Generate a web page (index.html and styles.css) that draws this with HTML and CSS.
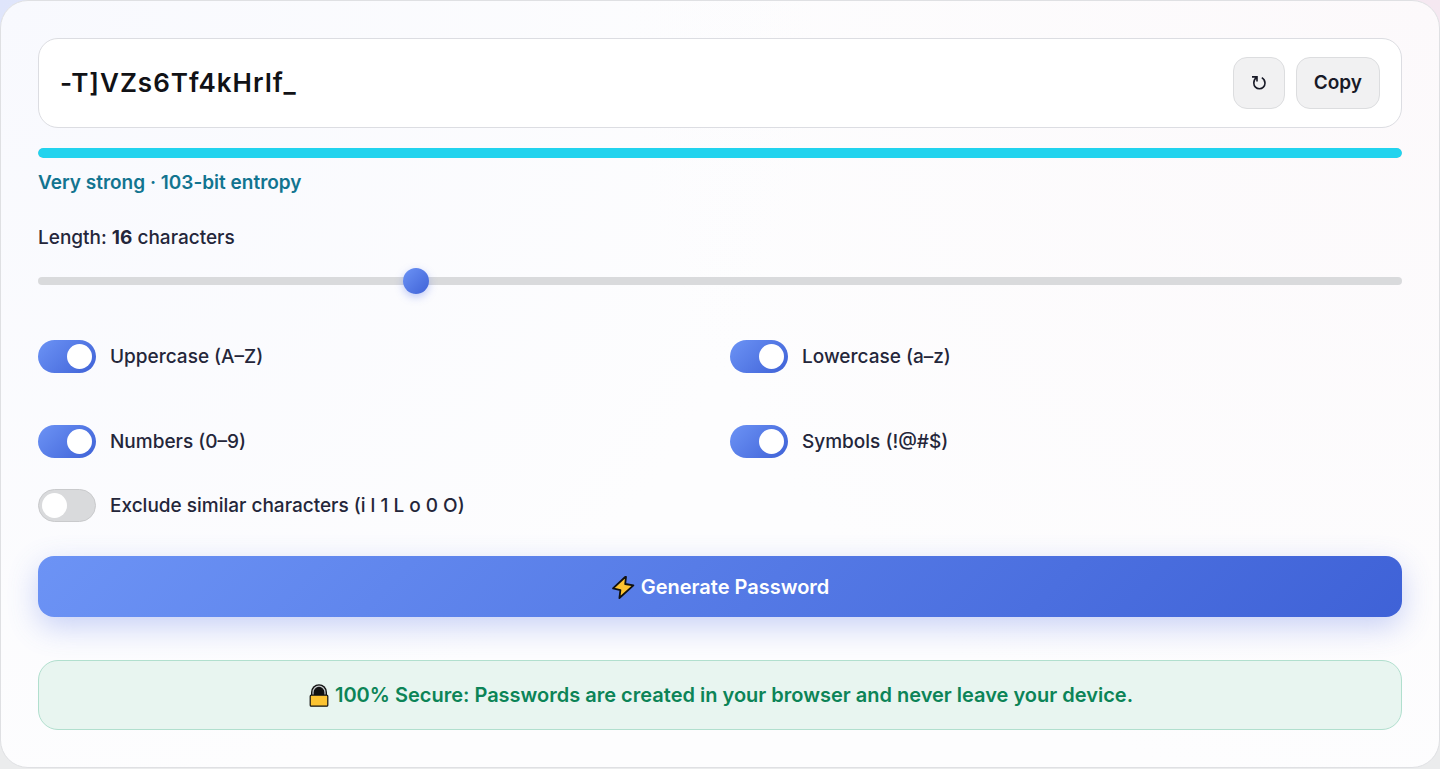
FILE: index.html
```html
<!DOCTYPE html>
<html lang="en">
<head>
    <meta charset="UTF-8">
    <meta name="viewport" content="width=device-width, initial-scale=1.0">
    <title>Password Generator</title>
    <link rel="stylesheet" href="styles.css">
</head>
<body>
    <main class="card">
        <!-- Generated password -->
        <div class="password-box">
            <output class="password" id="password" for="length">-T]VZs6Tf4kHrIf_</output>
            <button class="btn-small" type="button" aria-label="Regenerate">
                <svg class="icon-refresh" viewBox="0 0 16 16" aria-hidden="true">
                    <path d="M1 1.9H6V6.4M5.8 2.2C3.8 3.4 2.8 5.6 2.8 8A5.6 5.8 0 0 0 14 8C14 5.8 12.8 3.8 10.8 2.6" />
                </svg>
            </button>
            <button class="btn-small" type="button">Copy</button>
        </div>

        <!-- Strength -->
        <div class="meter"><div class="meter-fill" style="width: 100%"></div></div>
        <p class="strength">Very strong · 103-bit entropy</p>

        <!-- Length -->
        <label class="length-label" for="length">Length: <strong>16</strong> characters</label>
        <input class="slider" type="range" id="length" min="4" max="48" value="16">

        <!-- Options -->
        <div class="options">
            <label class="option"><input class="toggle" type="checkbox" checked>Uppercase (A–Z)</label>
            <label class="option"><input class="toggle" type="checkbox" checked>Lowercase (a–z)</label>
            <label class="option"><input class="toggle" type="checkbox" checked>Numbers (0–9)</label>
            <label class="option"><input class="toggle" type="checkbox" checked>Symbols (!@#$)</label>
        </div>
        <label class="option"><input class="toggle" type="checkbox">Exclude similar characters (i l 1 L o 0 O)</label>

        <button class="btn-generate" type="button">
            <svg class="icon" viewBox="0 0 24 24" aria-hidden="true">
                <path d="M14.2 2 2 13.4 9.4 15.2 8.4 23 22.4 10.4 14.2 9 15 2Z" fill="#fcc331" stroke="#111" stroke-width="1.8" stroke-linejoin="round" />
            </svg>
            Generate Password
        </button>

        <p class="notice">
            <svg class="icon" viewBox="0 0 24 24" aria-hidden="true">
                <path d="M4 12.5V9.2A8 8 0 0 1 20 9.2V12.5Z" fill="#111" />
                <path d="M6 12.5V9.4A6 6.2 0 0 1 18 9.4V12.5" fill="none" stroke="#c4c7c9" stroke-width="1.2" />
                <rect x="3.2" y="12.2" width="17.6" height="11" rx="1" fill="#fcc331" stroke="#111" stroke-width="1.2" />
            </svg>
            100% Secure: Passwords are created in your browser and never leave your device.
        </p>
    </main>
</body>
</html>
```
FILE: styles.css
```css
* {
    box-sizing: border-box;
}
body {
    margin: 0;
    font-family: Inter, "Liberation Sans", sans-serif;
    font-size: 19px;
    font-weight: 500;
    line-height: 26px;
    color: #24263a;
    background: linear-gradient(90deg, #dfe5fb, #f0eef8 50%, #f5e8f1) top / 100% 50% no-repeat #ebeced;
}
.card {
    display: flex;
    flex-direction: column;
    padding: 37px;
    border: 1px solid #dfe0e3;
    border-radius: 28px;
    background:
        radial-gradient(circle at 0 0, #f8f9fe, rgba(251, 252, 254, 0) 50%),
        radial-gradient(circle at 100% 0, #fcf9fb, rgba(253, 252, 253, 0) 50%),
        #fdfdfe;
}
button {
    font: inherit;
    cursor: pointer;
}
.password-box {
    display: flex;
    align-items: center;
    gap: 11px;
    padding: 18px 21px;
    border: 1px solid #dcdde2;
    border-radius: 20px;
    background: #fff;
}
.password {
    flex: 1;
    font-size: 26px;
    font-weight: 600;
    line-height: 36px;
    letter-spacing: 1px;
    color: #111216;
}
.btn-small {
    display: flex;
    align-items: center;
    justify-content: center;
    height: 52px;
    padding: 0 17px;
    border: 1px solid #dcdddf;
    border-radius: 14px;
    background: #f1f1f2;
    color: #181a27;
    font-weight: 600;
}
.icon-refresh {
    width: 16px;
    height: 16px;
    fill: none;
    stroke: #181a27;
    stroke-width: 1.6;
}
.meter {
    height: 10px;
    margin-top: 20px;
    border-radius: 5px;
    background: #d9dadc;
    overflow: hidden;
}
.meter-fill {
    height: 100%;
    border-radius: 5px;
    background: #22d3ee;
}
.strength {
    margin: 12px 0 0;
    font-weight: 600;
    color: #127490;
}
.length-label {
    margin-top: 29px;
}
.length-label strong {
    font-weight: 700;
}
.slider {
    appearance: none;
    width: 100%;
    height: 8px;
    margin: 26px 0 0;
    border-radius: 4px;
    background: #d9dadc;
}
.slider::-webkit-slider-thumb {
    appearance: none;
    width: 26px;
    height: 26px;
    border-radius: 50%;
    background: linear-gradient(135deg, #6c93f5, #3f62d7);
    box-shadow: 0 3px 8px rgba(79, 110, 230, 0.35);
}
.options {
    display: grid;
    grid-template-columns: 1fr 1fr;
    gap: 52px 20px;
    margin: 55px 0 31px;
}
.option {
    display: flex;
    align-items: center;
    gap: 14px;
}
.toggle {
    appearance: none;
    display: flex;
    align-items: center;
    width: 58px;
    height: 33px;
    margin: 0;
    padding: 0 3px;
    border: 1px solid #c9cacc;
    border-radius: 17px;
    background: #d9dadc;
}
.toggle::before {
    content: "";
    width: 25px;
    height: 25px;
    border-radius: 50%;
    background: #fff;
}
.toggle:checked {
    justify-content: flex-end;
    border-color: transparent;
    background: linear-gradient(135deg, #6c93f5, #3f62d7) border-box;
}
.btn-generate {
    display: flex;
    align-items: center;
    justify-content: center;
    gap: 6px;
    height: 61px;
    margin-top: 34px;
    border: none;
    border-radius: 16px;
    background: linear-gradient(135deg, #6c93f5, #3f62d7);
    box-shadow: 0 10px 30px rgba(79, 110, 230, 0.3);
    color: #fff;
    font-size: 20px;
    font-weight: 600;
}
.icon {
    flex: none;
    width: 24px;
    height: 24px;
}
.notice {
    display: flex;
    align-items: center;
    justify-content: center;
    gap: 4px;
    margin: 43px 0 0;
    padding: 21px;
    border: 1px solid #b1dfce;
    border-radius: 20px;
    background: #e8f5f0;
    color: #0c8457;
    font-size: 20px;
    font-weight: 600;
}
```
